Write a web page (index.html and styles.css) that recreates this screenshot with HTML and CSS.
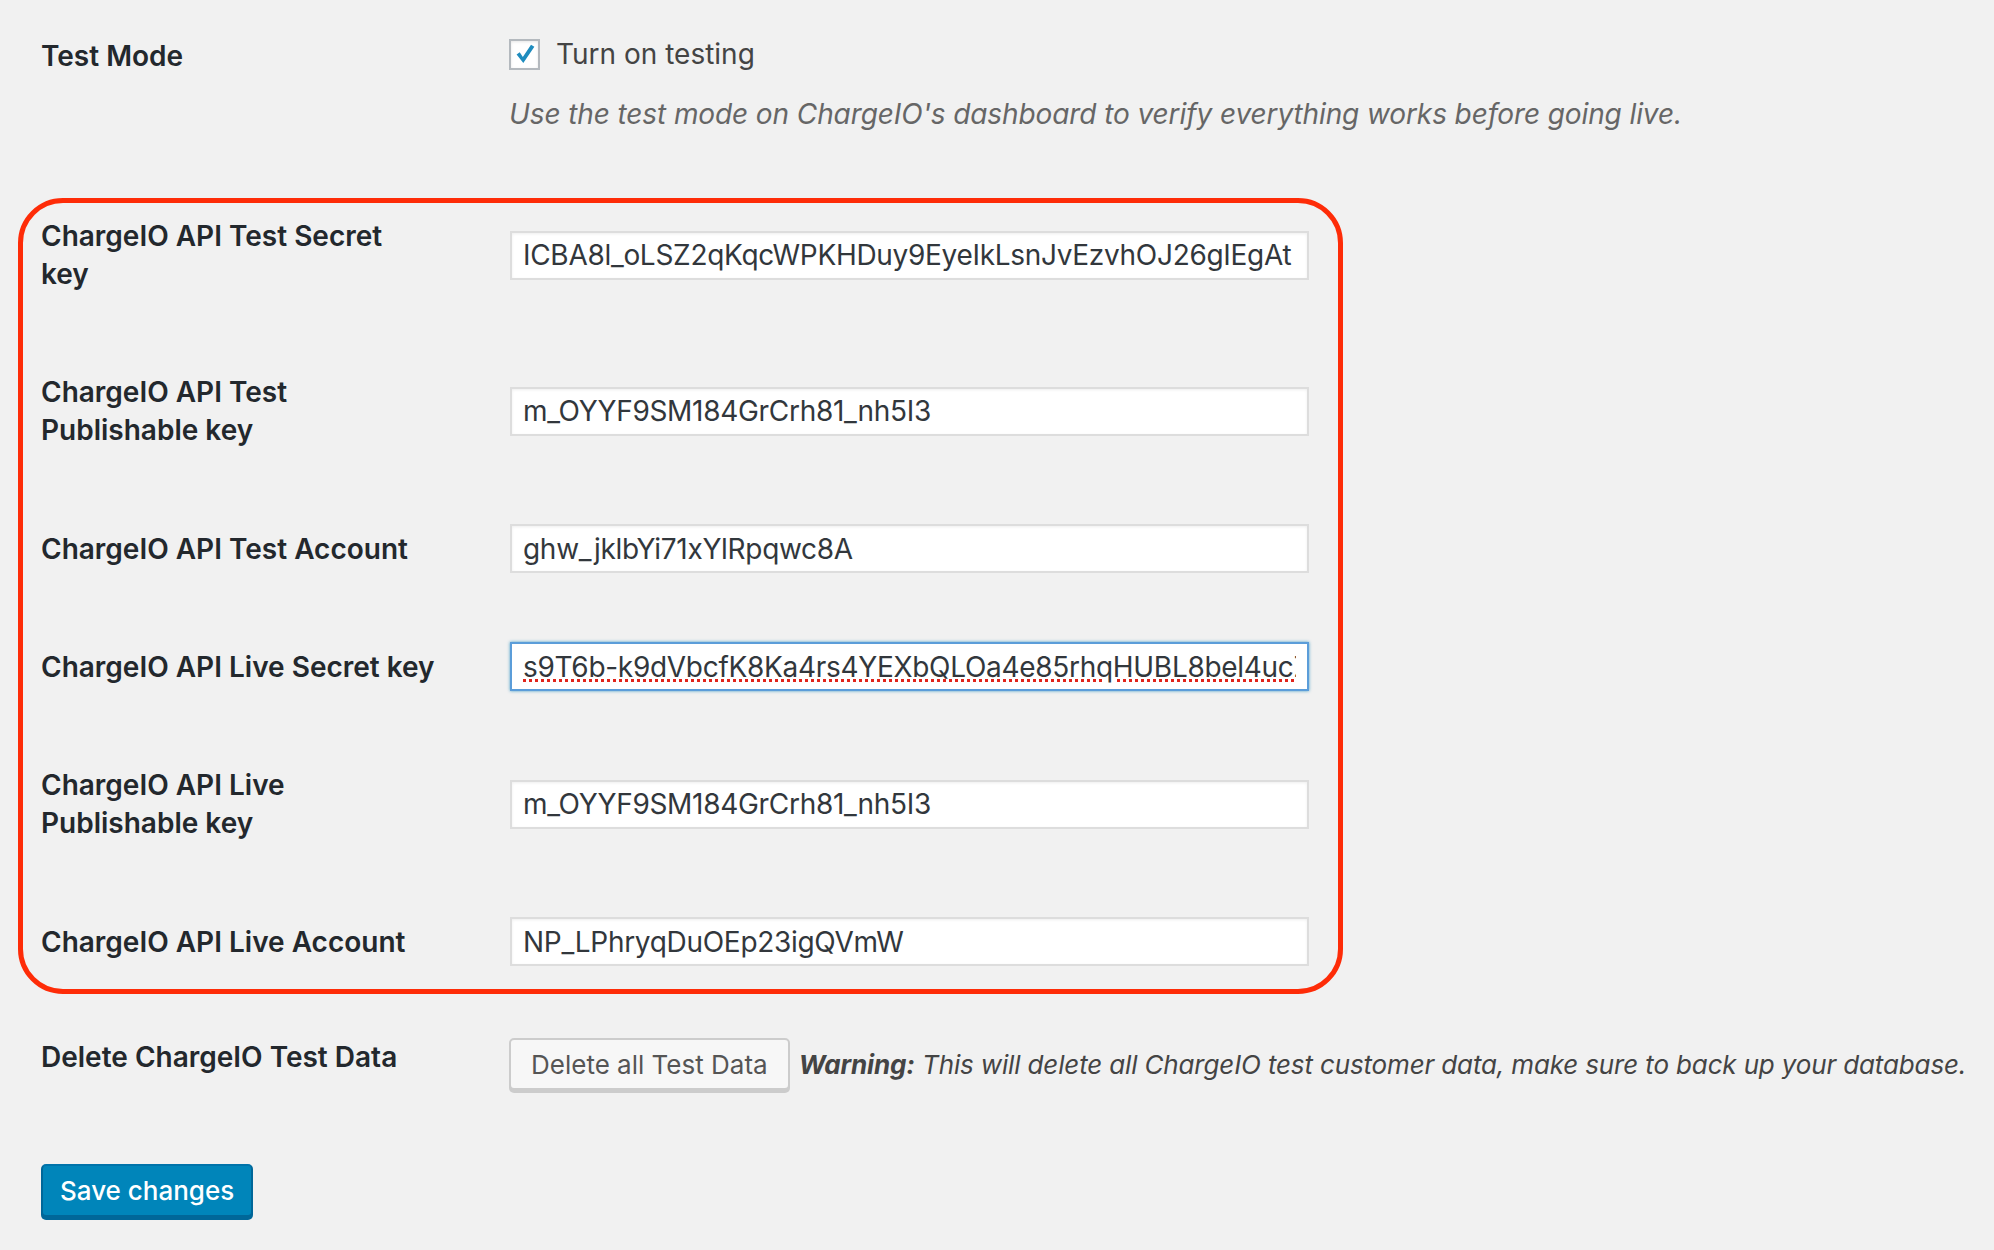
FILE: index.html
```html
<!DOCTYPE html>
<html>
<head>
<meta charset="utf-8">
<link rel="stylesheet" href="styles.css">
</head>
<body>
<div class="page">
  <div class="row row--plain">
    <div class="label label--top">Test Mode</div>
    <div class="field">
      <label class="check-line">
        <span class="checkbox">
          <svg viewBox="0 0 20 20" width="24" height="24"><path d="M3 10.4 L5.6 8.6 L8.2 12.4 L15 2.2 L17.8 4 L8.6 17.6 Z" fill="#1e8cbe"/></svg>
        </span>
        <span class="check-text">Turn on testing</span>
      </label>
      <p class="desc">Use the test mode on ChargeIO's dashboard to verify everything works before going live.</p>
    </div>
  </div>

  <div class="api-box">
    <div class="api-row api-row--first">
      <div class="label">ChargeIO API Test Secret<br>key</div>
      <input class="input" type="text" value="ICBA8l_oLSZ2qKqcWPKHDuy9EyeIkLsnJvEzvhOJ26gIEgAt" spellcheck="false">
    </div>
    <div class="api-row">
      <div class="label">ChargeIO API Test<br>Publishable key</div>
      <input class="input" type="text" value="m_OYYF9SM184GrCrh81_nh5I3" spellcheck="false">
    </div>
    <div class="api-row">
      <div class="label">ChargeIO API Test Account</div>
      <input class="input" type="text" value="ghw_jklbYi71xYlRpqwc8A" spellcheck="false">
    </div>
    <div class="api-row api-row--tight">
      <div class="label">ChargeIO API Live Secret key</div>
      <input class="input input--focus" type="text" value="s9T6b-k9dVbcfK8Ka4rs4YEXbQLOa4e85rhqHUBL8bel4ucZx" spellcheck="false">
    </div>
    <div class="api-row">
      <div class="label">ChargeIO API Live<br>Publishable key</div>
      <input class="input" type="text" value="m_OYYF9SM184GrCrh81_nh5I3" spellcheck="false">
    </div>
    <div class="api-row">
      <div class="label">ChargeIO API Live Account</div>
      <input class="input" type="text" value="NP_LPhryqDuOEp23igQVmW" spellcheck="false">
    </div>
  </div>

  <div class="row row--plain row--delete">
    <div class="label">Delete ChargeIO Test Data</div>
    <div class="field field--inline">
      <button class="btn" type="button">Delete all Test Data</button>
      <span class="warning"><strong>Warning:</strong> This will delete all ChargeIO test customer data, make sure to back up your database.</span>
    </div>
  </div>

  <div class="submit">
    <button class="btn btn--primary" type="button">Save changes</button>
  </div>
</div>
</body>
</html>
```

FILE: styles.css
```css
* { box-sizing: border-box; }

body {
  margin: 0;
  background: #f1f1f1;
  font-family: Inter, "Noto Sans", sans-serif;
  font-size: 28px;
  color: #444;
}

.page {
  padding: 35px 0 40px 18px;
}

.row {
  display: grid;
  grid-template-columns: 468px auto;
}

.row--plain {
  padding-left: 23px;
}

.label {
  font-weight: 600;
  color: #23282d;
  line-height: 38px;
}

.label--top {
  margin-top: 2px;
}

.check-line {
  display: flex;
  align-items: center;
  gap: 16px;
  height: 38px;
  color: #444;
}

.checkbox {
  width: 31px;
  height: 31px;
  border: 2px solid #b4b9be;
  background: #fff;
  box-shadow: inset 0 1px 3px rgba(0,0,0,.1);
  display: flex;
  align-items: center;
  justify-content: center;
}

.desc {
  margin: 22px 0 0;
  font-style: italic;
  color: #666;
  line-height: 38px;
  letter-spacing: -0.1px;
}

.api-box {
  margin-top: 65px;
  width: 1325px;
  border: 5px solid #fe2c08;
  border-radius: 45px;
  padding: 14px 29px 23px 18px;
  display: flex;
  flex-direction: column;
  gap: 75px;
}

.api-row {
  display: grid;
  grid-template-columns: 469px 799px;
  align-items: center;
}

.api-row--first {
  margin-bottom: 5px;
}

.api-row--tight {
  margin-top: -6px;
}

.input {
  height: 49px;
  width: 100%;
  border: 2px solid #ddd;
  background: #fff;
  box-shadow: inset 0 1px 3px rgba(0,0,0,.07);
  padding: 0 11px;
  font-family: inherit;
  font-size: 28px;
  letter-spacing: -0.3px;
  color: #32373c;
  outline: none;
}

.input--focus {
  border-color: #5b9dd9;
  box-shadow: 0 0 3px rgba(30,140,190,.8);
  text-decoration: underline dotted #e0241b;
  text-decoration-thickness: 3px;
}

.row--delete {
  margin-top: 44px;
}

.field--inline {
  display: flex;
  align-items: center;
  gap: 9px;
}

.btn {
  font-family: inherit;
  font-size: 26px;
  height: 52px;
  padding: 0 20px;
  border: 2px solid #ccc;
  border-radius: 5px;
  background: #f7f7f7;
  color: #555;
  box-shadow: 0 3px 0 #ccc;
  cursor: pointer;
  white-space: nowrap;
}

.warning {
  font-size: 26px;
  font-style: italic;
  color: #444;
  white-space: nowrap;
  letter-spacing: -0.15px;
}

.submit {
  margin-top: 74px;
  padding-left: 23px;
}

.btn--primary {
  height: 53px;
  padding: 0 17px;
  background: #0085ba;
  border-color: #0073aa #006799 #006799;
  box-shadow: 0 3px 0 #006799;
  color: #fff;
  font-weight: 500;
}
```
